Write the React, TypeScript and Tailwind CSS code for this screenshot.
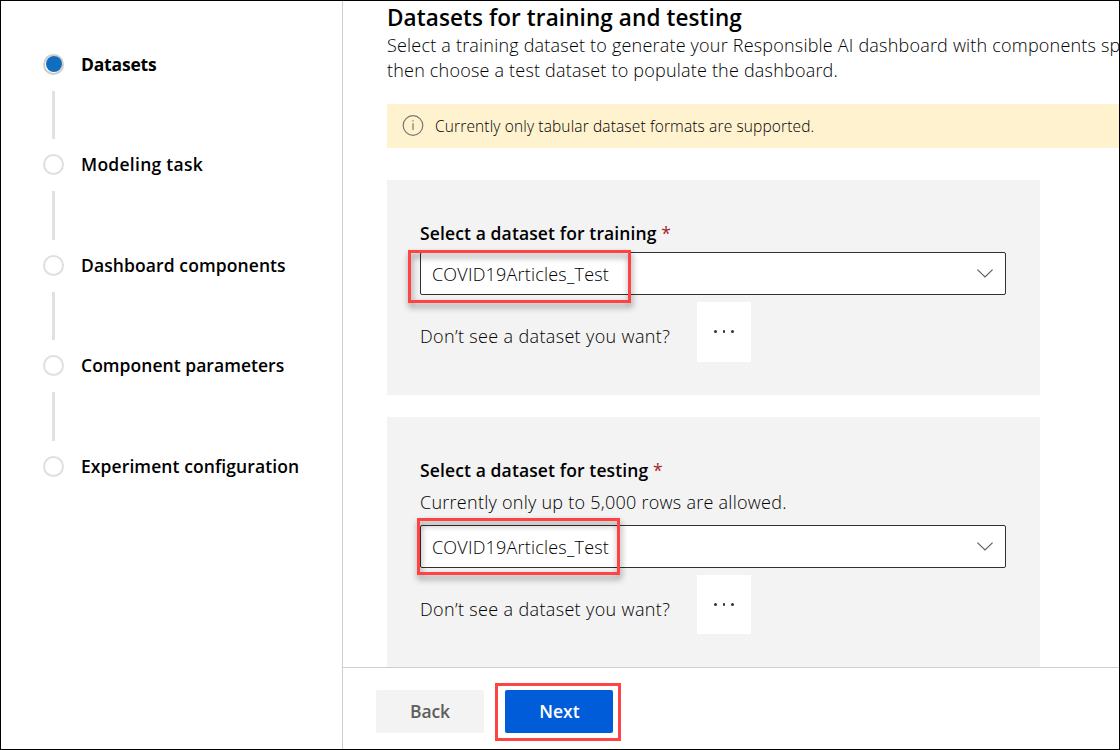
import type { ReactNode } from "react";

const steps = [
  { label: "Datasets", active: true, text: "font-bold tracking-[-0.2px]" },
  { label: "Modeling task", active: false, text: "font-semibold tracking-[0.27px]" },
  { label: "Dashboard components", active: false, text: "font-semibold tracking-[0.1px]" },
  { label: "Component parameters", active: false, text: "font-semibold tracking-[0.04px]" },
  { label: "Experiment configuration", active: false, text: "font-semibold tracking-[0.09px]" },
];

function Stepper() {
  return (
    <nav className="flex w-[342px] shrink-0 flex-col border-r border-[#cfcfcf] pl-[42px] pt-[52px]">
      {steps.map((step, i) => (
        <div key={step.label} className="flex flex-col">
          <div className="flex h-[22px] items-center gap-[17px]">
            <span
              className={
                step.active
                  ? "flex size-[21px] items-center justify-center rounded-full border-2 border-[#cfcdcb]"
                  : "size-[21px] rounded-full border-2 border-[#e1dfdd]"
              }
            >
              {step.active && <span className="size-4 shrink-0 rounded-full bg-[#106ebe]" />}
            </span>
            <span className={`whitespace-nowrap pb-[0.6px] text-[17.5px] leading-[22px] text-black ${step.text}`}>
              {step.label}
            </span>
          </div>
          {i < steps.length - 1 && (
            <div className="flex h-[78.5px] items-start pl-[9px] pt-[15.8px]">
              <span className="h-[48.5px] w-[3px] bg-[#e1e1e1]" />
            </div>
          )}
        </div>
      ))}
    </nav>
  );
}

function Chevron() {
  return (
    <svg viewBox="0 0 16 9" className="h-[9px] w-4" fill="none" stroke="#605e5c" strokeWidth="1.2">
      <path d="M0.4 0.6 L8 8 L15.6 0.6" />
    </svg>
  );
}

function DatasetSelect({ highlight }: { highlight: ReactNode }) {
  return (
    <div className="relative flex h-[43px] w-[586px] items-center justify-between rounded-[2px] border border-[#323130] bg-white pl-[11px] pr-3">
      <span className="pt-px text-[18px] font-light tracking-[0.2px] text-black">COVID19Articles_Test</span>
      <Chevron />
      {highlight}
    </div>
  );
}

function MissingDataset({ box }: { box: string }) {
  return (
    <div className="mt-[7px] flex items-start">
      <span className="w-[277px] whitespace-nowrap pt-[22px] text-[18px] font-light leading-6 tracking-[0.35px] text-black">
        Don’t see a dataset you want?
      </span>
      <button className={`flex w-[54px] items-start justify-center gap-[6px] bg-white pt-[28px] ${box}`}>
        <span className="size-[2.5px] rounded-full bg-[#323130]" />
        <span className="size-[2.5px] rounded-full bg-[#323130]" />
        <span className="size-[2.5px] rounded-full bg-[#323130]" />
      </button>
    </div>
  );
}

export default function App() {
  return (
    <div className="flex h-[750px] w-[1120px] overflow-hidden border border-black bg-white font-['Open_Sans',sans-serif]">
      <Stepper />
      <main className="flex min-w-0 flex-1 flex-col">
        <section className="flex h-[666px] shrink-0 flex-col overflow-hidden pl-11">
          <h1 className="mt-[2px] whitespace-nowrap text-[22.5px] font-semibold leading-[30px] tracking-[0.1px] text-black">
            Datasets for training and testing
          </h1>
          <p className="whitespace-nowrap text-[18px] font-light leading-[25px] tracking-[0.2px] text-black">
            Select a training dataset to generate your Responsible AI dashboard with components specified below,
            <br />
            then choose a test dataset to populate the dashboard.
          </p>
          <div className="mt-[21px] flex h-11 shrink-0 items-center gap-[11px] bg-[#fff2cf] pl-[15px]">
            <svg viewBox="0 0 22 22" className="size-[22px]" fill="none" stroke="#797775" strokeWidth="1.2">
              <circle cx="11" cy="10.5" r="9.8" />
              <path d="M11 8.2V15M11 5.2V6.6" />
            </svg>
            <span className="pt-px text-[15.5px] font-light tracking-[0.14px] text-black">
              Currently only tabular dataset formats are supported.
            </span>
          </div>
          <div className="mt-8 h-[215px] w-[653px] shrink-0 bg-[#f3f3f3] pl-[33px] pt-[41px]">
            <div className="h-[31px] whitespace-nowrap text-[17.5px] font-semibold leading-6 tracking-[0.12px] text-black">
              Select a dataset for training <span className="font-normal text-[#a4262c]">*</span>
            </div>
            <DatasetSelect
              highlight={
                <span className="absolute -left-[13px] -top-[3px] h-[53px] w-[223px] border-[3px] border-[#ff4343] drop-shadow-[1px_4px_3px_rgba(0,0,0,0.45)]" />
              }
            />
            <MissingDataset box="h-[60px]" />
          </div>
          <div className="mt-[22px] h-[260px] w-[653px] shrink-0 bg-[#f3f3f3] pl-[33px] pt-[41px]">
            <div className="whitespace-nowrap text-[17.5px] font-semibold leading-6 tracking-[0.12px] text-black">
              Select a dataset for testing <span className="font-normal text-[#a4262c]">*</span>
            </div>
            <div className="mt-2 h-[35px] whitespace-nowrap text-[18px] font-light leading-6 tracking-[0.26px] text-black">
              Currently only up to 5,000 rows are allowed.
            </div>
            <DatasetSelect
              highlight={
                <span className="absolute -left-[4px] -top-[8px] h-[57px] w-[203px] border-[3px] border-[#ff4343] drop-shadow-[1px_4px_3px_rgba(0,0,0,0.45)]" />
              }
            />
            <MissingDataset box="h-[59px]" />
          </div>
        </section>
        <footer className="flex flex-1 items-start gap-[21px] border-t border-[#cfcfcf] pl-[33px] pt-[22px]">
          <button className="h-[43px] w-[108px] rounded-[2px] bg-[#f3f3f3] text-[17.5px] font-semibold tracking-[-0.1px] text-[#605e5c]">
            Back
          </button>
          <button className="relative h-[43px] w-[108px] rounded-[2px] bg-[#015cda] pl-px text-[17.5px] font-semibold text-white">
            Next
            <span className="absolute -left-[10px] -top-[7px] h-[58px] w-[126px] border-[3px] border-[#ff4343]" />
          </button>
        </footer>
      </main>
    </div>
  );
}
